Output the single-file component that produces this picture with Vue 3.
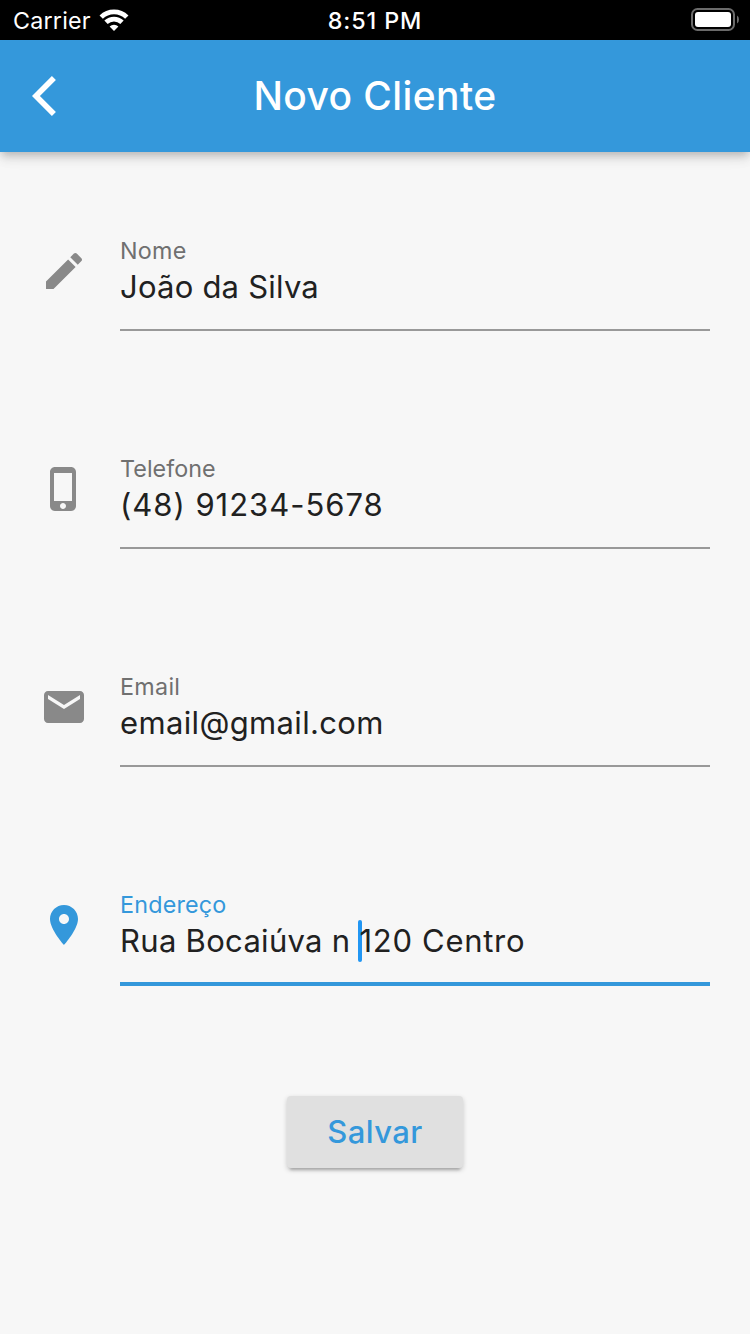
<script setup>
const fields = [
  {
    id: 'nome',
    label: 'Nome',
    value: 'João da Silva',
    icon: 'M3 17.25V21h3.75L17.81 9.94l-3.75-3.75L3 17.25zM20.71 7.04c.39-.39.39-1.02 0-1.41l-2.34-2.34c-.39-.39-1.02-.39-1.41 0l-1.83 1.83 3.75 3.75 1.83-1.83z',
  },
  {
    id: 'telefone',
    label: 'Telefone',
    value: '(48) 91234-5678',
    icon: 'M15.5 1h-8C6.12 1 5 2.12 5 3.5v17C5 21.88 6.12 23 7.5 23h8c1.38 0 2.5-1.12 2.5-2.5v-17C18 2.12 16.88 1 15.5 1zm-4 21c-.83 0-1.5-.67-1.5-1.5s.67-1.5 1.5-1.5 1.5.67 1.5 1.5-.67 1.5-1.5 1.5zm4.5-4H7V4h9v14z',
  },
  {
    id: 'email',
    label: 'Email',
    value: 'email@gmail.com',
    icon: 'M20 4H4c-1.1 0-1.99.9-1.99 2L2 18c0 1.1.9 2 2 2h16c1.1 0 2-.9 2-2V6c0-1.1-.9-2-2-2zm0 4l-8 5-8-5V6l8 5 8-5v2z',
  },
  {
    id: 'endereco',
    label: 'Endereço',
    value: 'Rua Bocaiúva n ',
    rest: '120 Centro',
    focused: true,
    icon: 'M12 2C8.13 2 5 5.13 5 9c0 5.25 7 13 7 13s7-7.75 7-13c0-3.87-3.13-7-7-7zm0 9.5c-1.38 0-2.5-1.12-2.5-2.5s1.12-2.5 2.5-2.5 2.5 1.12 2.5 2.5-1.12 2.5-2.5 2.5z',
  },
]
</script>

<template>
  <div class="screen">
    <div class="status">
      <div class="carrier">
        <span class="carrier-name">Carrier</span>
        <svg class="wifi" width="30" height="24" viewBox="0 0 30 24">
          <path d="M2.2 9.1A18.3 18.3 0 0 1 27.8 9.1" />
          <path d="M7 14.3A11.5 11.5 0 0 1 23 14.3" />
          <path class="dot" d="M15 23L10.6 18.6A6.3 6.3 0 0 1 19.4 18.6Z" />
        </svg>
      </div>
      <span class="time">8:51 PM</span>
      <svg class="battery" width="50" height="24" viewBox="0 0 50 24">
        <rect class="shell" x="2" y="1" width="42" height="21" rx="5.5" />
        <rect class="charge" x="5" y="4" width="36" height="15" rx="3" />
        <path class="nub" d="M47 7.5Q49 8.5 49 11.5T47 15.5Z" />
      </svg>
    </div>

    <header class="bar">
      <svg class="back" width="48" height="48" viewBox="0 0 24 24">
        <path d="M11.95 3.95L9.95 2 0 12l9.95 10 2-1.95L3.95 12z" />
      </svg>
      <h1 class="title">Novo Cliente</h1>
    </header>

    <main class="form">
      <div v-for="f in fields" :key="f.id" class="row" :class="[f.id, { focused: f.focused }]">
        <svg class="icon" width="48" height="48" viewBox="0 0 24 24"><path :d="f.icon" /></svg>
        <div class="field">
          <div class="label"><span>{{ f.label }}</span></div>
          <div class="value"><span>{{ f.value }}</span><i v-if="f.focused" class="caret"></i><span v-if="f.rest" class="rest">{{ f.rest }}</span></div>
        </div>
      </div>
      <button class="save" type="button">Salvar</button>
    </main>
  </div>
</template>

<style>
body {
  margin: 0;
  background: #f7f7f7;
}
</style>

<style scoped>
.screen {
  width: 750px;
  height: 1334px;
  overflow: hidden;
  display: flex;
  flex-direction: column;
  background: #f7f7f7;
  font-family: Inter, "Liberation Sans", sans-serif;
}
.status {
  height: 40px;
  flex: none;
  box-sizing: border-box;
  padding: 0 10px 0 13px;
  display: grid;
  grid-template-columns: 1fr auto 1fr;
  align-items: center;
  background: #000;
  color: #fff;
  line-height: 40px;
}
.carrier {
  display: flex;
  align-items: center;
}
.carrier-name {
  width: 86px;
  padding-top: 2px;
  line-height: 38px;
  font-size: 23.3px;
  letter-spacing: 0.2px;
}
.wifi path {
  fill: none;
  stroke: #fff;
  stroke-width: 4.8;
}
.wifi .dot {
  fill: #fff;
  stroke: none;
}
.time {
  padding-top: 2px;
  margin-right: 3px;
  line-height: 38px;
  font-size: 23.3px;
  font-weight: 550;
  letter-spacing: 0.9px;
}
.battery {
  justify-self: end;
}
.shell {
  fill: none;
  stroke: #6b6b6b;
  stroke-width: 2;
}
.charge {
  fill: #fff;
}
.nub {
  fill: #6b6b6b;
}
.bar {
  height: 112px;
  flex: none;
  display: grid;
  grid-template-columns: 80px 1fr 80px;
  align-items: center;
  background: #3498db;
  box-shadow: 0 4px 8px -2px rgba(0, 0, 0, 0.2), 0 8px 10px rgba(0, 0, 0, 0.07), 0 2px 20px rgba(0, 0, 0, 0.06);
}
.back {
  margin-left: 32px;
  fill: #fff;
}
.title {
  margin: 0;
  text-align: center;
  color: #fff;
  font-size: 39px;
  line-height: 112px;
  font-weight: 540;
  letter-spacing: 0.4px;
}
.form {
  padding: 79px 40px 0;
  display: flex;
  flex-direction: column;
}
.row {
  height: 218px;
  display: flex;
}
.icon {
  flex: none;
  margin-top: 16px;
  margin-right: 32px;
  fill: #898989;
}
.field {
  flex: 1;
  height: 98px;
  border-bottom: 2px solid #999;
  white-space: pre;
}
.label {
  height: 40px;
  line-height: 40px;
  font-size: 23.3px;
  letter-spacing: 0.3px;
  color: #707070;
}
.telefone .label {
  letter-spacing: 0.05px;
}
.endereco .label {
  letter-spacing: 0.2px;
}
.value {
  display: flex;
  height: 32px;
  line-height: 32px;
  font-size: 31px;
  letter-spacing: 0.35px;
  color: #212121;
}
.nome .value {
  letter-spacing: 0.22px;
}
.telefone .value {
  letter-spacing: 0.97px;
}
.endereco .value {
  letter-spacing: 0.3px;
}
.endereco .rest {
  letter-spacing: 0.7px;
}
.focused .icon {
  fill: #3498db;
}
.focused .label {
  color: #3498db;
}
.focused .field {
  height: 97px;
  border-bottom: 4px solid #3498db;
}
.caret {
  width: 4px;
  height: 42px;
  margin: -5px -3px 0 -1px;
  border-radius: 2px;
  background: #2196f3;
}
.save {
  width: 176px;
  height: 72px;
  margin: -7px 0 0 247px;
  padding: 0;
  border: 0;
  border-radius: 4px;
  background: #e0e0e0;
  box-shadow: 0 5px 3px -3px rgba(0, 0, 0, 0.2), 0 2px 5px rgba(0, 0, 0, 0.2);
  color: #3498db;
  font: 540 31px/72px Inter, "Liberation Sans", sans-serif;
  letter-spacing: 0.4px;
}
</style>
